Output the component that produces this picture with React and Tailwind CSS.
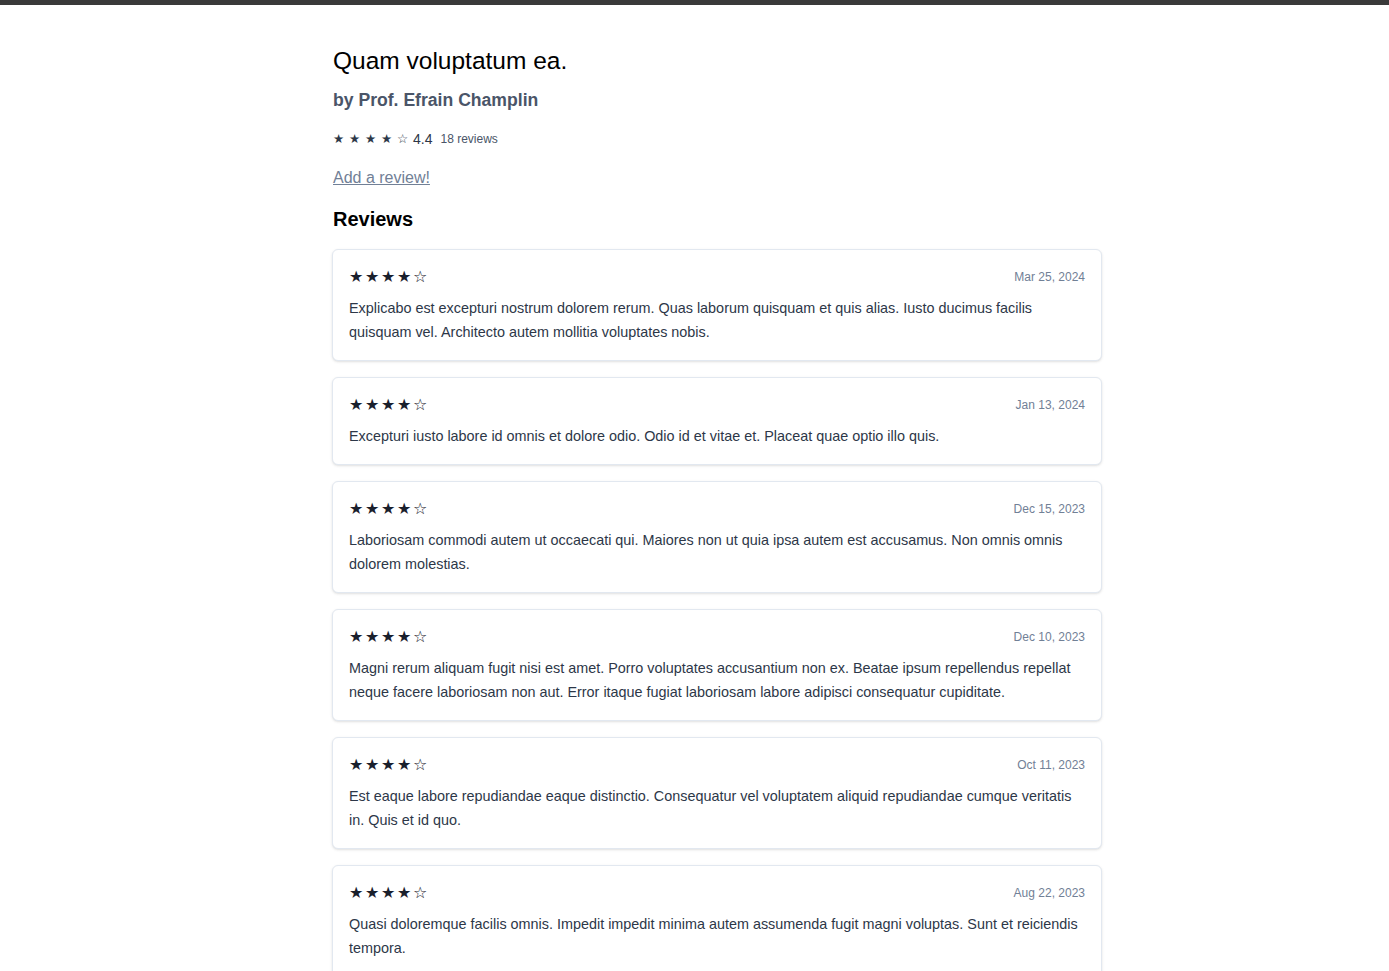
import React from 'react';

const reviews = [
  {
    date: 'Mar 25, 2024',
    rating: 4,
    body: 'Explicabo est excepturi nostrum dolorem rerum. Quas laborum quisquam et quis alias. Iusto ducimus facilis quisquam vel. Architecto autem mollitia voluptates nobis.',
  },
  {
    date: 'Jan 13, 2024',
    rating: 4,
    body: 'Excepturi iusto labore id omnis et dolore odio. Odio id et vitae et. Placeat quae optio illo quis.',
  },
  {
    date: 'Dec 15, 2023',
    rating: 4,
    body: 'Laboriosam commodi autem ut occaecati qui. Maiores non ut quia ipsa autem est accusamus. Non omnis omnis dolorem molestias.',
  },
  {
    date: 'Dec 10, 2023',
    rating: 4,
    body: 'Magni rerum aliquam fugit nisi est amet. Porro voluptates accusantium non ex. Beatae ipsum repellendus repellat neque facere laboriosam non aut. Error itaque fugiat laboriosam labore adipisci consequatur cupiditate.',
  },
  {
    date: 'Oct 11, 2023',
    rating: 4,
    body: 'Est eaque labore repudiandae eaque distinctio. Consequatur vel voluptatem aliquid repudiandae cumque veritatis in. Quis et id quo.',
  },
  {
    date: 'Aug 22, 2023',
    rating: 4,
    body: 'Quasi doloremque facilis omnis. Impedit impedit minima autem assumenda fugit magni voluptas. Sunt et reiciendis tempora.',
  },
];

function Stars({ rating, small }) {
  return (
    <div className={`flex items-center font-['DejaVu_Sans',sans-serif] ${small ? 'text-[12.5px] text-[#2d3748]' : 'text-[16px] text-[#1a202c]'}`}>
      {[1, 2, 3, 4, 5].map(i => (
        <span key={i} className="w-4 leading-5">
          {i <= rating ? '★' : '☆'}
        </span>
      ))}
    </div>
  );
}

export default function App() {
  return (
    <div className="min-h-screen bg-white font-['Liberation_Sans',Arial,sans-serif]">
      <div className="h-[5px] bg-[#3a3a3a]"></div>

      <div className="pl-[333px] pt-10">
        <div className="w-[768px]">
          <h1 className="text-[24.5px] leading-8 text-black">Quam voluptatum ea.</h1>
          <h2 className="mt-[9px] text-[17.6px] leading-7 font-bold text-[#4a5568]">by Prof. Efrain Champlin</h2>

          <div className="mt-[15px] flex items-center h-5">
            <Stars rating={4} small />
            <span className="text-sm font-medium text-[#2d3748]">4.4</span>
            <span className="ml-2 text-xs text-[#4a5568]">18 reviews</span>
          </div>

          <div className="mt-[17px] leading-6">
            <a href="#" className="text-base text-[#718096] underline">Add a review!</a>
          </div>

          <h3 className="mt-[15px] text-xl leading-7 font-bold text-black">Reviews</h3>

          {/* Review list */}
          <div className="mt-4 -ml-px w-[770px] flex flex-col gap-4 pb-10">
            {reviews.map((r, idx) => (
              <div key={idx} className="bg-white border border-[#e2e8f0] rounded-md shadow-sm p-4">
                <div className="flex items-center justify-between h-[21px]">
                  <Stars rating={r.rating} />
                  <span className="text-xs text-[#718096]">{r.date}</span>
                </div>
                <p className="mt-[9px] text-[14.4px] leading-6 text-[#2d3748]">{r.body}</p>
              </div>
            ))}
          </div>
        </div>
      </div>
    </div>
  );
}
